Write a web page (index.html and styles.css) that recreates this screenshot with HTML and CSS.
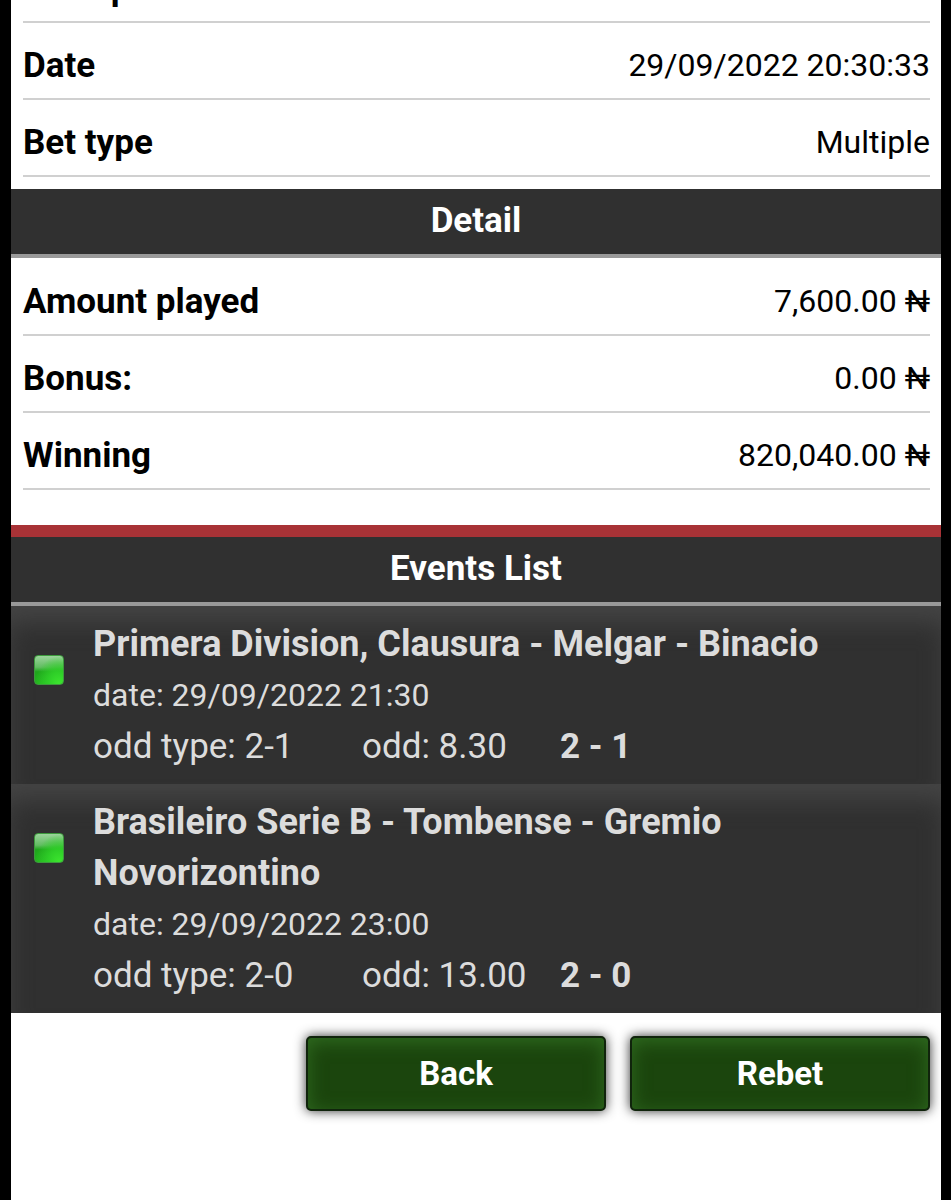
FILE: index.html
```
<!DOCTYPE html>
<html lang="en">
<head>
    <meta charset="UTF-8">
    <meta name="viewport" content="width=device-width, initial-scale=1.0">
    <title>Bet Detail</title>
    <link rel="stylesheet" href="styles.css">
</head>
<body>
    <main class="page">
        <dl class="info">
            <div class="row"><dt>Receipt</dt><dd></dd></div>
            <div class="row"><dt>Date</dt><dd>29/09/2022 20:30:33</dd></div>
            <div class="row"><dt>Bet type</dt><dd>Multiple</dd></div>
        </dl>

        <h2 class="title">Detail</h2>
        <dl class="info amounts">
            <div class="row"><dt>Amount played</dt><dd>7,600.00 ₦</dd></div>
            <div class="row"><dt>Bonus:</dt><dd>0.00 ₦</dd></div>
            <div class="row"><dt>Winning</dt><dd>820,040.00 ₦</dd></div>
        </dl>

        <h2 class="title events-title">Events List</h2>
        <ul class="events">
            <li class="event">
                <span class="status"></span>
                <div class="event-text">
                    <h3>Primera Division, Clausura - Melgar - Binacio</h3>
                    <p class="date">date: 29/09/2022 21:30</p>
                    <p class="odds">
                        <span>odd type: 2-1</span>
                        <span>odd: 8.30</span>
                        <strong>2 - 1</strong>
                    </p>
                </div>
            </li>
            <li class="event">
                <span class="status"></span>
                <div class="event-text">
                    <h3>Brasileiro Serie B - Tombense - Gremio Novorizontino</h3>
                    <p class="date">date: 29/09/2022 23:00</p>
                    <p class="odds">
                        <span>odd type: 2-0</span>
                        <span>odd: 13.00</span>
                        <strong>2 - 0</strong>
                    </p>
                </div>
            </li>
        </ul>

        <div class="buttons">
            <button type="button">Back</button>
            <button type="button">Rebet</button>
        </div>
    </main>
</body>
</html>
```
FILE: styles.css
```
* {
    box-sizing: border-box;
}
body {
    margin: 0;
    background-color: #000;
    color: #000;
    font-family: Roboto, sans-serif;
    overflow: hidden;
}
h2, h3, p, dl, dd, ul {
    margin: 0;
    padding: 0;
}
.page {
    display: flow-root;
    min-height: 100vh;
    margin: 0 10px 0 11px;
    background-color: #fff;
}
.info {
    padding: 0 11px 12px 12px;
}
.info:first-child {
    margin-top: -54px;
}
.amounts {
    padding-top: 1px;
    padding-bottom: 35px;
}
.row {
    display: flex;
    justify-content: space-between;
    align-items: center;
    height: 77px;
    padding-top: 10px;
    border-bottom: 2px solid #d0d0d0;
}
.row dt {
    font-size: 35px;
    font-weight: bold;
}
.row dd {
    padding-bottom: 2px;
    font-size: 32px;
}
.title {
    padding-bottom: 1px;
    border-bottom: 4px solid #999;
    background-color: #303030;
    color: #fff;
    font-size: 35px;
    line-height: 64px;
    text-align: center;
}
.events-title {
    border-top: 12px solid #a83236;
}
.events {
    list-style: none;
}
.event {
    display: flex;
    padding: 13px 12px 12px 23px;
    background-color: #303030;
    box-shadow: inset 0 20px 24px -4px #444;
    color: #dcdcdc;
}
.status {
    flex: none;
    width: 30px;
    height: 30px;
    margin: 36px 29px 0 0;
    border: 1px solid #3c9a3c;
    border-radius: 4px;
    background: radial-gradient(ellipse at 85% 100%, #3ce52e 0%, #2fcf28 30%, transparent 70%),
        linear-gradient(#9bd49b, #62bd62 40%, #1fa51c 56%, #24b41f);
}
.event-text {
    flex: 1;
    line-height: 51px;
}
.event h3 {
    max-width: 780px;
    font-size: 36px;
}
.date {
    font-size: 32px;
}
.odds {
    display: grid;
    grid-template-columns: 269px 198px auto;
    font-size: 35px;
}
.buttons {
    display: flex;
    justify-content: flex-end;
    gap: 24px;
    padding: 23px 11px 23px 12px;
}
button {
    width: 300px;
    height: 75px;
    border: 2px solid #10240c;
    border-radius: 5px;
    background-color: #1b450d;
    box-shadow: 0 0 12px #333, inset 0 4px 18px #2f6b20;
    color: #fff;
    font-family: inherit;
    font-size: 33px;
    font-weight: bold;
    cursor: pointer;
}
```
